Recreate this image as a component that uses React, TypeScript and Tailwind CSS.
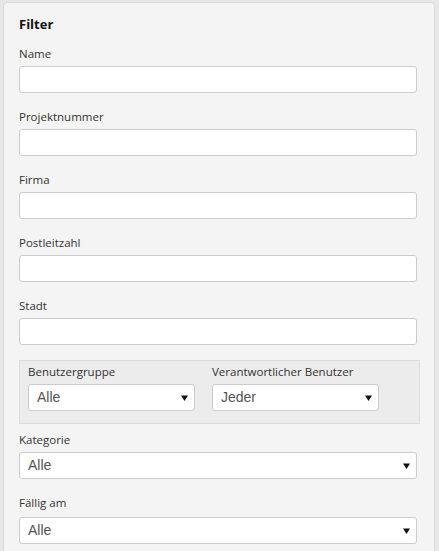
import React from 'react';

const labelCls = "block text-[11.5px] leading-[15px] text-[#333] mb-[5px]";

const TextField = ({ label }: { label: string }) => (
    <div className="mb-[16px]">
        <label className={labelCls}>{label}</label>
        <div className="h-[27px] w-[398px] bg-white border border-[#cccccc] rounded-[3px]" />
    </div>
);

const Caret = () => (
    <svg width="7" height="6" viewBox="0 0 7 6" className="shrink-0">
        <polygon points="0,0.5 7,0.5 3.5,6" fill="#111" />
    </svg>
);

const SelectBox = ({ value, width }: { value: string; width: string }) => (
    <div
        className={`${width} h-[27px] bg-white border border-[#cccccc] rounded-[3px] flex items-center justify-between pl-[8px] pr-[6px]`}
    >
        <span className="text-[14px] text-[#555] font-['Liberation_Sans',Arial,sans-serif]">{value}</span>
        <Caret />
    </div>
);

export default function App() {
    return (
        <div className="w-[439px] h-[551px] bg-[#e7e7e7] pl-[3px] pr-[4px] pt-[2px] overflow-hidden font-['Open_Sans',sans-serif]">
            <div className="h-[560px] bg-[#f4f4f4] border border-[#dadada] rounded-t-[4px] pl-[15px] pt-[12px]">
                <h3 className="text-[13px] leading-[18px] font-bold text-[#111] mb-[13px]">Filter</h3>

                <TextField label="Name" />
                <TextField label="Projektnummer" />
                <TextField label="Firma" />
                <TextField label="Postleitzahl" />
                <TextField label="Stadt" />

                <div className="w-[401px] -mt-[1px] bg-[#ececec] border border-[#dcdcdc] pl-[8px] pt-[3px] pb-[12px] flex">
                    <div className="w-[184px]">
                        <label className={labelCls}>Benutzergruppe</label>
                        <SelectBox value="Alle" width="w-[167px]" />
                    </div>
                    <div className="w-[184px]">
                        <label className={labelCls}>Verantwortlicher Benutzer</label>
                        <SelectBox value="Jeder" width="w-[167px]" />
                    </div>
                </div>

                <div className="mt-[8px]">
                    <label className={labelCls}>Kategorie</label>
                    <SelectBox value="Alle" width="w-[398px]" />
                </div>

                <div className="mt-[16px]">
                    <label className="block text-[11.5px] leading-[15px] text-[#333] mb-[7px]">Fällig am</label>
                    <SelectBox value="Alle" width="w-[398px]" />
                </div>
            </div>
        </div>
    );
}
